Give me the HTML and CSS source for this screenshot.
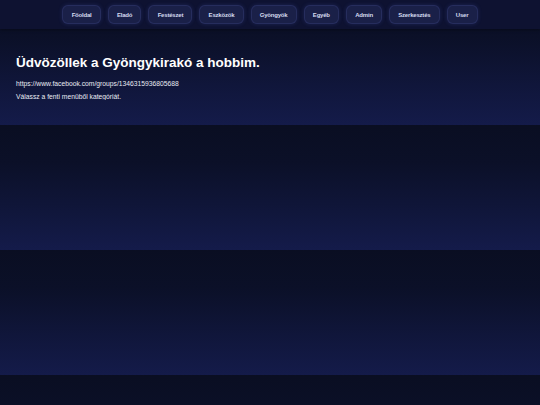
FILE: index.html
```html
<!DOCTYPE html>
<html lang="hu">
<head>
<meta charset="utf-8">
<title>Gyöngykirakó</title>
<link rel="stylesheet" href="styles.css">
</head>
<body>
<header class="topbar">
  <nav class="menu">
    <a class="menu-btn" href="#">Főoldal</a>
    <a class="menu-btn" href="#">Eladó</a>
    <a class="menu-btn" href="#">Festészet</a>
    <a class="menu-btn" href="#">Eszközök</a>
    <a class="menu-btn" href="#">Gyöngyök</a>
    <a class="menu-btn" href="#">Egyéb</a>
    <a class="menu-btn" href="#">Admin</a>
    <a class="menu-btn" href="#">Szerkesztés</a>
    <a class="menu-btn" href="#">User</a>
  </nav>
</header>
<main class="content">
  <h1 class="title">Üdvözöllek a Gyöngykirakó a hobbim.</h1>
  <p class="line">https://www.facebook.com/groups/1346315936805688</p>
  <p class="line">Válassz a fenti menüből kategóriát.</p>
</main>
</body>
</html>
```

FILE: styles.css
```css
html, body {
  margin: 0;
  padding: 0;
}
body {
  font-family: "Liberation Sans", Arial, sans-serif;
  font-size: 6.75px;
  color: #e9ebf3;
  background: linear-gradient(180deg, #0a0e22 0%, #0b1028 30%, #141b4a 100%);
  background-size: 100% 125px;
  background-repeat: repeat;
}
.topbar {
  height: 29px;
  box-sizing: border-box;
  padding-top: 5px;
  background: #0e1231;
  box-shadow: 0 1px 3px rgba(0, 0, 0, 0.35);
}
.menu {
  display: flex;
  justify-content: center;
  gap: 7px;
}
.menu-btn {
  display: flex;
  align-items: center;
  height: 19px;
  box-sizing: border-box;
  padding: 0 8.2px;
  font-size: 6px;
  letter-spacing: -0.2px;
  font-weight: bold;
  color: #d5dbef;
  text-decoration: none;
  background: #1a2048;
  border: 1px solid rgba(110, 130, 230, 0.14);
  border-radius: 6px;
  box-shadow: 0 0 4px rgba(90, 110, 230, 0.2);
}
.content {
  padding: 26px 16px 0;
}
.title {
  margin: 0;
  font-size: 13.5px;
  font-weight: bold;
  color: #ffffff;
}
.line {
  margin: 6px 0 0;
  color: #e9ebf3;
}
.title + .line {
  margin-top: 10px;
}
```
